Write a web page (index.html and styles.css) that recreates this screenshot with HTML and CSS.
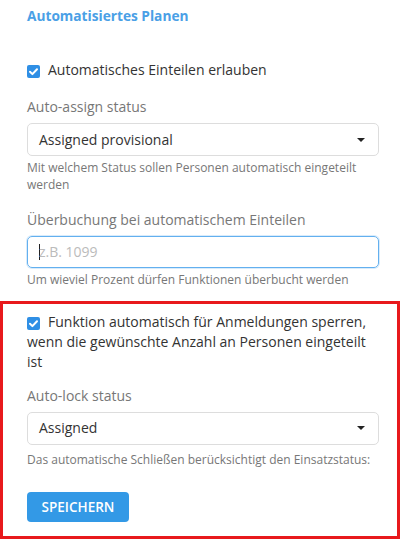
FILE: index.html
```html
<!DOCTYPE html>
<html lang="de">
<head>
<meta charset="utf-8">
<link rel="stylesheet" href="styles.css">
</head>
<body>
<div class="page">
  <h2 class="title">Automatisiertes Planen</h2>

  <label class="check check-first"><svg class="box" viewBox="0 0 13 13" width="13" height="13"><rect width="13" height="13" rx="2" fill="#2f8fe5"/><path d="M3 6.8 L5.4 9.1 L10 4.2" fill="none" stroke="#fff" stroke-width="2" stroke-linecap="round" stroke-linejoin="round"/></svg>Automatisches Einteilen erlauben</label>

  <div class="field field-1">
    <div class="label">Auto-assign status</div>
    <div class="select"><span>Assigned provisional</span><span class="caret"></span></div>
    <div class="help">Mit welchem Status sollen Personen automatisch eingeteilt werden</div>
  </div>

  <div class="field field-2">
    <div class="label">Überbuchung bei automatischem Einteilen</div>
    <div class="input"><span class="cursor"></span><span class="placeholder">z.B. 1099</span></div>
    <div class="help">Um wieviel Prozent dürfen Funktionen überbucht werden</div>
  </div>

  <div class="highlight">
    <label class="check check-multi"><svg class="box" viewBox="0 0 13 13" width="13" height="13"><rect width="13" height="13" rx="2" fill="#2f8fe5"/><path d="M3 6.8 L5.4 9.1 L10 4.2" fill="none" stroke="#fff" stroke-width="2" stroke-linecap="round" stroke-linejoin="round"/></svg>Funktion automatisch für Anmeldungen sperren, wenn die gewünschte Anzahl an Personen eingeteilt ist</label>

    <div class="field field-3">
      <div class="label">Auto-lock status</div>
      <div class="select"><span>Assigned</span><span class="caret"></span></div>
      <div class="help help-last">Das automatische Schließen berücksichtigt den Einsatzstatus:</div>
    </div>

    <button class="btn">SPEICHERN</button>
  </div>
</div>
</body>
</html>
```

FILE: styles.css
```css
* { box-sizing: border-box; }
html, body { margin: 0; padding: 0; background: #fff; }
body {
  font-family: "Open Sans", "Liberation Sans", sans-serif;
  color: #333;
  width: 401px;
  height: 540px;
  overflow: hidden;
}
.page { padding-top: 6px; }
.title {
  margin: 0 0 0 27px;
  font-size: 13.7px;
  font-weight: 700;
  color: #4aa0e6;
  line-height: 20px;
}
.check {
  display: block;
  margin: 0 22px 0 27px;
  font-size: 14px;
  line-height: 20px;
  color: #333;
}
.check-first { margin-top: 34px; }
.box {
  display: inline-block;
  vertical-align: -3px;
  margin-right: 8px;
}
.field { margin: 0 22px 0 27px; }
.field-1 { margin-top: 17px; }
.field-2 { margin-top: 16.5px; }
.label {
  font-size: 14px;
  line-height: 20px;
  color: #777;
  margin-bottom: 6px;
}
.select {
  height: 33px;
  border: 1px solid #ddd;
  border-radius: 5px;
  display: flex;
  align-items: center;
  justify-content: space-between;
  padding: 0 13px 0 11px;
  font-size: 14px;
  line-height: 20px;
  color: #333;
}
.caret {
  width: 0; height: 0;
  border-left: 4px solid transparent;
  border-right: 4px solid transparent;
  border-top: 4.5px solid #222;
}
.help {
  font-size: 12px;
  line-height: 17px;
  color: #777;
  margin-top: 3px;
}
.input {
  height: 32px;
  border: 1px solid #63b0ef;
  box-shadow: 0 0 0 1px rgba(99, 176, 239, 0.25);
  border-radius: 5px;
  display: flex;
  align-items: center;
  padding: 0 11px;
  font-size: 14px;
}
.cursor { width: 1px; height: 16px; background: #222; margin-right: -1px; }
.placeholder { color: #bbb; }
.highlight {
  margin-top: 13px;
  border: 3px solid #e8191c;
  width: 400px;
  height: 238px;
  padding-top: 8px;
}
.highlight .check { margin: 0 18px 0 24px; }
.highlight .field { margin: 14px 18px 0 24px; }
.help-last { margin-top: 6px; }
.btn {
  display: block;
  margin: 24px 0 0 24px;
  background: #3399e6;
  color: #fff;
  border: 0;
  border-radius: 4px;
  width: 102px;
  height: 30px;
  font-family: "Open Sans", "Liberation Sans", sans-serif;
  font-size: 13.5px;
  font-weight: 600;
  padding: 0;
}
```
